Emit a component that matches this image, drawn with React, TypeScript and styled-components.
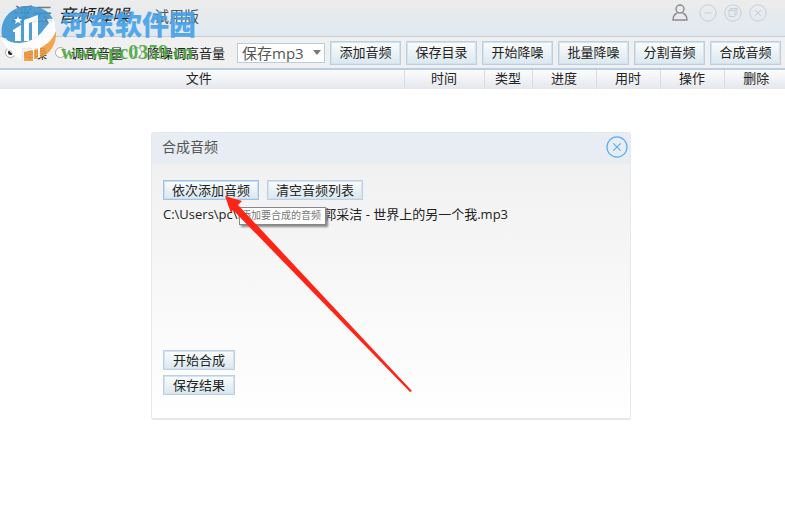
import React from "react";
import styled, { createGlobalStyle } from "styled-components";

const Global = createGlobalStyle`
  * { box-sizing: border-box; }
  html, body, #root { height: 100%; }
  body { margin: 0; background: #fff; color: #222; overflow: hidden;
    font: 13px/18px "Open Sans", "Noto Sans CJK SC", sans-serif; }
  button, select, input { font: inherit; color: inherit; margin: 0; }
`;

const Window = styled.div`
  position: relative;
  min-height: 100%;
  background: #fff;
`;
const TitleBar = styled.header`
  display: flex;
  justify-content: space-between;
  height: 37px;
  padding: 0 18px 0 10px;
  background: linear-gradient(#ececec, #e0e9f0);
  border-bottom: 1px solid #c9cdd1;
`;
const Titles = styled.h1`
  display: flex;
  gap: 8px;
  margin: 0;
  padding-top: 4px;
  font-size: 18px;
  line-height: 22px;
  font-weight: 400;
  font-style: italic;
`;
const Edition = styled.small`
  margin-left: 16px;
  padding-top: 1px;
  font-size: 15px;
  font-style: normal;
  color: #555;
`;
const Brand = styled.span`
  font-size: 20px;
  color: #777;
`;
const Controls = styled.div`
  display: flex;
  gap: 7px;
  padding-top: 4px;
`;
const IconButton = styled.button<{ $tone?: string }>`
  display: flex;
  padding: 0;
  border: 0;
  background: none;
  color: ${(p) => p.$tone ?? "#c3cfe0"};
  height: 18px;
`;
const UserButton = styled(IconButton)`
  margin-right: 3px;
`;
const Toolbar = styled.div`
  display: flex;
  align-items: center;
  justify-content: space-between;
  height: 33px;
  padding: 0 4px 0 5px;
  background: #f0f0f0;
  border-bottom: 2px solid #b9cde3;
`;
const Modes = styled.div`
  display: flex;
  gap: 8px;
`;
const Mode = styled.label`
  display: flex;
  align-items: center;
  gap: 5px;
  white-space: nowrap;
`;
const Radio = styled.input`
  appearance: none;
  width: 11px;
  height: 11px;
  border: 1px solid #aaa;
  border-radius: 50%;
  background: #fff;
  &:checked { background: radial-gradient(#222 0 2px, #fff 3px); }
`;
const Actions = styled.div`
  display: flex;
  align-items: center;
  gap: 5px;
`;
const SelectBox = styled.div`
  position: relative;
  height: 20px;
  width: 88px;
  display: flex;
`;
const Select = styled.select`
  appearance: none;
  width: 100%;
  padding: 0 0 0 4px;
  border: 1px solid #b9cde0;
  background: #fff;
  font-size: 15px;
  line-height: 18px;
  color: #555;
`;
const Caret = styled.svg`
  position: absolute;
  right: 4px;
  top: 7px;
  pointer-events: none;
`;
const Button = styled.button<{ $tall?: boolean; $wide?: boolean; $hot?: boolean }>`
  width: ${(p) => (p.$wide ? 96 : p.$tall ? 71 : 72)}px;
  height: ${(p) => (p.$tall ? 24 : 20)}px;
  padding: 0 0 1px;
  border: 1px solid ${(p) => (p.$hot ? "#9fc4e6" : "#bdd0e3")};
  box-shadow: inset 0 0 0 1px ${(p) => (p.$hot ? "#c5def2" : "#d3e2ef")};
  background: linear-gradient(#fbfcfc, #dae8ee);
  white-space: nowrap;
  line-height: 16px;
`;
const Table = styled.table`
  width: 100%;
  border-collapse: collapse;
  table-layout: fixed;
`;
const Th = styled.th<{ $w?: number }>`
  width: ${(p) => (p.$w ? p.$w + "px" : "auto")};
  height: 19px;
  padding: 0 0 2px;
  line-height: 17px;
  font-weight: 400;
  background: linear-gradient(#fbfcfd, #e5e7ed);
  border-right: 1px solid #dadde3;
  &:first-child { padding-right: 6px; }
  &:last-child { border-right: 0; padding-left: 3px; }
`;
const Dialog = styled.section`
  width: 61.1%;
  margin: 43px auto 0 151px;
  border: 1px solid #e2e9ef;
  border-bottom: 2px solid #e2e8ec;
  border-radius: 3px;
  background: linear-gradient(#efefef, #fff);
`;
const DialogHead = styled.div`
  display: flex;
  justify-content: space-between;
  align-items: center;
  height: 31px;
  padding: 0 2px 4px 10px;
  background: #e7edf2;
`;
const DialogTitle = styled.h2`
  margin: 0;
  font-size: 14px;
  line-height: 20px;
  font-weight: 400;
  color: #555;
`;
const CloseButton = styled(IconButton)`
  height: 22px;
`;
const DialogBody = styled.div`
  display: flex;
  flex-direction: column;
  height: 254px;
  padding: 16px 11px 23px;
`;
const ButtonRow = styled.div`
  display: flex;
  gap: 8px;
`;
const Path = styled.p`
  position: relative;
  margin: 4px 0 auto;
  line-height: 20px;
  white-space: nowrap;
`;
const Tooltip = styled.span`
  position: absolute;
  left: 76px;
  top: 3px;
  width: 87px;
  height: 18px;
  padding-right: 4px;
  text-align: right;
  border: 1px solid #888;
  box-shadow: 2px 2px 2px #888;
  background: #fff;
  color: #777;
  font-size: 10px;
  line-height: 15px;
`;
const Stack = styled.div`
  display: flex;
  flex-direction: column;
  gap: 5px;
`;
const Arrow = styled.svg`
  position: absolute;
  left: 224px;
  top: 196px;
  pointer-events: none;
`;
const Watermark = styled.div`
  position: absolute;
  left: 0;
  top: 5px;
  display: flex;
  gap: 4px;
  pointer-events: none;
  white-space: nowrap;
`;
const MarkText = styled.div`
  display: flex;
  flex-direction: column;
  padding-top: 1px;
`;
const MarkName = styled.span`
  font: 900 27px/36px "Noto Sans CJK SC", sans-serif;
  color: #45a1ea;
  opacity: 0.9;
`;
const MarkUrl = styled.span`
  font: 700 20px/20px "Liberation Serif", serif;
  color: #4aa83c;
  opacity: 0.9;
`;

const Round = ({ size, children }: { size: number; children: React.ReactNode }) => (
  <svg width={size} height={size} viewBox="0 0 18 18" fill="none" stroke="currentColor">
    <circle cx="9" cy="9" r="8.2" />
    {children}
  </svg>
);

const columns: [string, number?][] = [
  ["文件"], ["时间", 80], ["类型", 48], ["进度", 64], ["用时", 64], ["操作", 64], ["删除", 61],
];

export default function App() {
  return (
    <Window>
      <Global />
      <TitleBar>
        <Titles><Brand>浮云</Brand>音频降噪<Edition>试用版</Edition></Titles>
        <Controls>
          <UserButton aria-label="用户" $tone="#8c8c8c">
            <svg width="18" height="18" viewBox="0 0 18 18" fill="none" stroke="currentColor" strokeWidth="1.4">
              <circle cx="9" cy="5" r="4" />
              <path d="M6.5 9C3.500 10 2 12.500 2 16H16C16 12.500 14.500 10 11.500 9" />
            </svg>
          </UserButton>
          <IconButton aria-label="最小化"><Round size={18}><path d="M5.500 9h7" /></Round></IconButton>
          <IconButton aria-label="还原"><Round size={18}><path d="M5 6.500h6v6H5zM7 6.500v-2h6v6h-2M11 6.500l2-2M5 6.500l2-2" /></Round></IconButton>
          <IconButton aria-label="关闭"><Round size={18}><path d="M6 6l6 6M12 6l-6 6" /></Round></IconButton>
        </Controls>
      </TitleBar>
      <Toolbar>
        <Modes>
          {["降噪", "调高音量", "降噪调高音量"].map((m, i) => (
            <Mode key={m}><Radio type="radio" name="mode" defaultChecked={i === 0} />{m}</Mode>
          ))}
        </Modes>
        <Actions>
          <SelectBox>
            <Select aria-label="保存格式"><option>保存mp3</option></Select>
            <Caret width="8" height="5"><path d="M0 0h8L4 5z" fill="#777" /></Caret>
          </SelectBox>
          {["添加音频", "保存目录", "开始降噪", "批量降噪", "分割音频", "合成音频"].map((b) => (
            <Button key={b} $tall>{b}</Button>
          ))}
        </Actions>
      </Toolbar>
      <Table>
        <thead><tr>{columns.map(([c, w]) => <Th key={c} $w={w}>{c}</Th>)}</tr></thead>
      </Table>
      <Dialog role="dialog" aria-labelledby="merge-title">
        <DialogHead>
          <DialogTitle id="merge-title">合成音频</DialogTitle>
          <CloseButton aria-label="关闭对话框" $tone="#58aef5">
            <Round size={22}><path d="M6 6l6 6M12 6l-6 6" /></Round>
          </CloseButton>
        </DialogHead>
        <DialogBody>
          <ButtonRow><Button $wide $hot>依次添加音频</Button><Button $wide>清空音频列表</Button></ButtonRow>
          <Path>C:\Users\pc\Desktop\音频\郭采洁 - 世界上的另一个我.mp3<Tooltip role="tooltip">添加要合成的音频</Tooltip></Path>
          <Stack><Button>开始合成</Button><Button>保存结果</Button></Stack>
        </DialogBody>
      </Dialog>
      <Arrow width="188" height="197" viewBox="0 0 188 197" aria-hidden="true">
        <path d="M1 0L18 5L14 9L188 195L186 196L9 14L7 17Z" fill="#ff2516" />
      </Arrow>
      <Watermark>
        <svg width="57" height="58" viewBox="0 5 57 58" opacity="0.88" aria-hidden="true">
          <path d="M2 40C8 54 22 62 30 61C44 58 56 46 56 30L50 22L20 44Z" fill="#fff" />
          <path d="M2 37C-1 18 12 6 29 6C40 6 49 11 53 19C45 18 37 22 31 28C22 37 12 42 2 37Z" fill="#3b94d0" />
          <path d="M6 39C12 45 30 45 41 33L49 23C45 18 36 20 31 26L12 34Z" fill="#3b94d0" />
          <path d="M13 30L21 25V41H15V32H13ZM24 20L38 15V36L32 40V22L29 23V41H24Z" fill="#fff" />
          <path d="M1 37C8 47 25 46 38 37C46 31 52 25 53 18C58 27 54 37 43 44C28 53 7 51 1 37Z" fill="#fff" />
          <path d="M56 31C57 44 50 54 40 58V48C48 44 53 39 56 31ZM24 52L33 50V61H24ZM34 50L38 49V59H34Z" fill="#f39a3c" />
          <path d="M18 16l1 3 3 0-2 2 1 3-3-2-3 2 1-3-2-2 3 0z" fill="#fff" />
        </svg>
        <MarkText><MarkName>河东软件园</MarkName><MarkUrl>www.pc0359.cn</MarkUrl></MarkText>
      </Watermark>
    </Window>
  );
}
